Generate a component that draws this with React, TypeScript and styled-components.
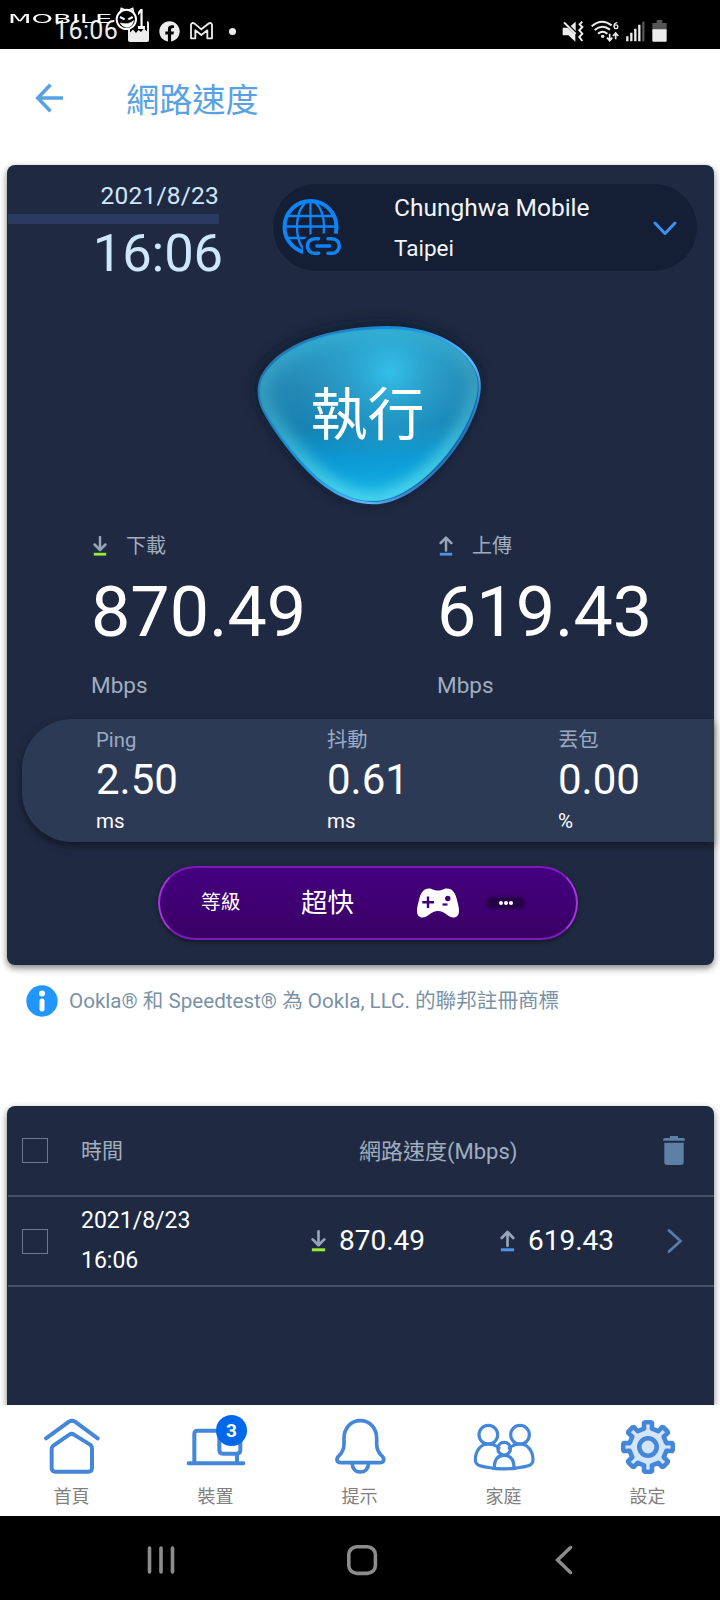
import React from "react";
import styled, { createGlobalStyle } from "styled-components";
import { FaFacebook } from "react-icons/fa";

const GlobalStyle = createGlobalStyle`
  * { box-sizing: border-box; }
  body {
    margin: 0;
    background: #fff;
    font-family: Roboto, "Noto Sans CJK TC", sans-serif;
  }
  svg { display: block; flex: none; }
`;

const Screen = styled.div`
  width: 720px;
  height: 1600px;
  display: flex;
  flex-direction: column;
  overflow: hidden;
  background: #fff;
`;

/* ---------- status bar ---------- */

const StatusBar = styled.div`
  position: relative;
  height: 49px;
  flex: none;
  background: #000;
  color: #ececec;
  display: flex;
  align-items: center;
  justify-content: space-between;
  padding: 13px 53px 0 54px;
`;

const StatusGroup = styled.div<{ $gap: number }>`
  display: flex;
  align-items: center;
  gap: ${(p) => p.$gap}px;
`;

const StatusTime = styled.span`
  font-size: 25px;
  line-height: 30px;
  letter-spacing: 0.4px;
  width: 64px;
`;

const Dot = styled.span`
  width: 7px;
  height: 7px;
  border-radius: 50%;
  background: #ececec;
  margin-left: 6px;
`;

const Watermark = styled.div`
  position: absolute;
  left: 8px;
  top: 6px;
  display: flex;
  align-items: center;
  color: #fff;
`;

const WatermarkText = styled.span`
  width: 107px;
  font: 13px/24px "DejaVu Sans", sans-serif;
  white-space: nowrap;
  transform: scaleX(2.1);
  transform-origin: left center;
`;

const WatermarkOne = styled.span`
  margin-left: -2px;
  font: 700 30px/24px "Liberation Sans", sans-serif;
  transform: scaleX(0.5);
  transform-origin: left center;
`;

/* ---------- header ---------- */

const Header = styled.header`
  height: 116px;
  flex: none;
  display: flex;
  align-items: flex-start;
  padding: 34px 0 0 35px;
`;

const Title = styled.h1`
  margin: 1px 0 0 62px;
  font-size: 33.2px;
  line-height: 33px;
  font-weight: 400;
  color: #58a2e4;
`;

/* ---------- cards ---------- */

const Card = styled.section<{ $height: number; $flat?: boolean }>`
  width: 707px;
  height: ${(p) => p.$height}px;
  flex: none;
  margin-left: 7px;
  padding-left: 1px;
  background: #1f2a42;
  border-radius: ${(p) => (p.$flat ? "8px 8px 0 0" : "8px")};
  box-shadow: 0 3px 7px rgba(0, 0, 0, 0.5);
`;

const TopRow = styled.div`
  display: flex;
  height: 122px;
  padding-top: 19px;
`;

const Clock = styled.div`
  width: 217px;
  margin-right: 48px;
  display: flex;
  flex-direction: column;
  align-items: flex-end;
  color: #cfe7fd;
`;

const ClockDate = styled.span`
  margin: -4px 6px 0 0;
  font-size: 24.5px;
  line-height: 31px;
  letter-spacing: 0.2px;
  padding-bottom: 3px;
`;

const ClockBar = styled.div`
  width: 211px;
  height: 10px;
  flex: none;
  background: #2a3a60;
  align-self: flex-start;
`;

const ClockTime = styled.span`
  font-size: 52.5px;
  line-height: 58px;
  letter-spacing: -0.1px;
  padding-right: 2px;
`;

const ServerPill = styled.button`
  width: 424px;
  height: 87px;
  border: 0;
  border-radius: 44px;
  background: #141f35;
  color: #f2f5fa;
  padding: 0 20px 0 9px;
  display: flex;
  align-items: center;
  font-family: inherit;
  text-align: left;
`;

const ServerText = styled.div`
  flex: 1;
  padding: 1px 0 0 52px;
  display: flex;
  flex-direction: column;
`;

const ServerLine = styled.span<{ $size: number }>`
  font-size: ${(p) => p.$size}px;
  line-height: 40px;
`;

const RunButton = styled.button`
  margin: 23px 0 0 232px;
  padding: 0;
  border: 0;
  background: none;
  display: grid;
  width: 260px;
  height: 210px;
  color: #fff;
  font-family: inherit;
  > * { grid-area: 1 / 1; }
`;

const RunLabel = styled.span`
  align-self: center;
  justify-self: center;
  font-size: 57px;
  line-height: 60px;
  padding: 2px 5px 0 0;
`;

const Speeds = styled.div`
  display: grid;
  grid-template-columns: 346px 1fr;
  padding-left: 83px;
  margin-top: 12px;
`;

const Speed = styled.div`
  display: flex;
  flex-direction: column;
  color: #a0adbf;
`;

const SpeedHead = styled.div`
  display: flex;
  align-items: center;
  gap: 19px;
  height: 28px;
  padding-left: 2px;
  font-size: 20px;
  line-height: 28px;
`;

const SpeedValue = styled.span`
  font-size: 70px;
  line-height: 84px;
  margin-top: 10px;
  color: #fff;
`;

const SpeedUnit = styled.span`
  font-size: 22.5px;
  line-height: 30px;
  margin-top: 16px;
`;

const Band = styled.div`
  margin: 19px 0 0 14px;
  height: 123px;
  border-radius: 50px 0 0 50px;
  background: #2d3a56;
  box-shadow: 0 4px 8px rgba(0, 0, 0, 0.45);
  display: grid;
  grid-template-columns: 231px 231px 1fr;
  padding: 7px 0 0 74px;
`;

const Stat = styled.div`
  display: flex;
  flex-direction: column;
`;

const StatName = styled.span`
  font-size: 20.3px;
  line-height: 28px;
  color: #9aabc1;
`;

const StatValue = styled.span`
  font-size: 42px;
  line-height: 52px;
  color: #fff;
`;

const StatUnit = styled.span`
  font-size: 20.5px;
  line-height: 30px;
  color: #fff;
`;

const Grade = styled.div`
  margin: 24px 0 0 150px;
  width: 420px;
  height: 74px;
  border-radius: 37px;
  border: 2px solid #7e18bf;
  border-left-color: #a832e0;
  border-right-color: #a832e0;
  background: linear-gradient(#450080, #390064);
  box-shadow: 0 2px 5px rgba(0, 0, 0, 0.5);
  color: #fff;
  display: flex;
  align-items: center;
  padding-left: 41px;
`;

const GradeLabel = styled.span`
  font-size: 19.7px;
  line-height: 30px;
  width: 100px;
`;

const GradeValue = styled.span`
  font-size: 26.5px;
  line-height: 34px;
  width: 116px;
`;

const More = styled.div`
  width: 37px;
  height: 10px;
  margin-left: 28px;
  border-radius: 5px;
  background: #280049;
  box-shadow: 0 0 3px 1px #280049;
  display: flex;
  align-items: center;
  justify-content: center;
  gap: 1px;
  > i { width: 4px; height: 4px; border-radius: 50%; background: #fff; }
`;

const Notice = styled.div`
  height: 141px;
  flex: none;
  padding: 20px 0 0 26px;
  display: flex;
  align-items: flex-start;
  gap: 11px;
  font-size: 20.6px;
  line-height: 32px;
  color: #7b91a5;
  white-space: nowrap;
`;

/* ---------- history ---------- */

const HistoryRow = styled.div<{ $height: number }>`
  height: ${(p) => p.$height}px;
  border-bottom: 2px solid #445166;
  display: flex;
  align-items: center;
  padding-left: 14px;
  color: #a0aebf;
  font-size: 22px;
`;

const Checkbox = styled.span`
  width: 26px;
  height: 25px;
  border: 1.5px solid #6b798c;
  margin-right: 33px;
`;

const HeadTime = styled.span`
  width: 278px;
  font-size: 21px;
  padding-bottom: 3px;
`;

const HeadSpeed = styled.span`
  width: 304px;
  padding-bottom: 4px;
`;

const RowTime = styled.div`
  width: 230px;
  display: flex;
  flex-direction: column;
  font-size: 23px;
  line-height: 40px;
  color: #fff;
`;

const RowSpeed = styled.div<{ $width: number }>`
  width: ${(p) => p.$width}px;
  display: flex;
  align-items: center;
  gap: 13px;
  padding-bottom: 1px;
  font-size: 28px;
  color: #fff;
`;

/* ---------- bottom navigation ---------- */

const TabBar = styled.nav`
  height: 111px;
  flex: none;
  background: #fff;
  display: grid;
  grid-template-columns: repeat(5, 144px);
`;

const Tab = styled.div`
  display: flex;
  flex-direction: column;
  align-items: center;
  font-size: 18px;
  color: #808080;
`;

const TabIcon = styled.div`
  position: relative;
  height: 82px;
  display: flex;
  align-items: center;
  justify-content: center;
  padding-top: 1px;
`;

const TabLabel = styled.span`
  line-height: 20px;
  padding-right: 1px;
`;

const Badge = styled.span`
  position: absolute;
  right: -1px;
  top: 10px;
  width: 31px;
  height: 31px;
  border-radius: 50%;
  background: #0068ea;
  color: #fff;
  font: 700 19px/31px Roboto, sans-serif;
  text-align: center;
`;

const SystemBar = styled.div`
  flex: 1;
  background: #000;
  display: flex;
  align-items: center;
  padding: 4px 0 0 147px;
`;

const SystemKey = styled.div<{ $width: number }>`
  width: ${(p) => p.$width}px;
`;

/* ---------- drawings ---------- */

const BLOB =
  "M440 48 C550 48 640 85 688 140 C722 180 730 220 716 275 C700 335 665 400 610 462 C550 530 475 583 400 583 C320 583 248 535 190 472 C135 412 95 355 66 300 C48 260 48 215 70 185 C112 122 190 88 260 70 C320 55 380 48 440 48 Z";
const BLOB_INNER =
  "M440 57 C542 56 628 88 678 142 C711 180 720 215 708 268 C692 328 657 394 602 455 C544 520 470 573 398 574 C325 574 253 528 196 467 C141 407 101 351 72 297 C54 258 56 219 76 190 C116 130 194 95 262 77 C322 63 380 57 440 57 Z";

const BlobDrawing = () => (
  <svg width="260" height="210" viewBox="0 0 780 630" overflow="visible">
    <defs>
      <linearGradient id="base" x1="0" y1="0" x2="0.08" y2="1">
        <stop offset="0" stopColor="#2ba2cc" />
        <stop offset="0.35" stopColor="#2588b4" />
        <stop offset="0.6" stopColor="#1683b4" />
        <stop offset="0.78" stopColor="#0c99d2" />
        <stop offset="1" stopColor="#12b0e6" />
      </linearGradient>
      <radialGradient id="glow" gradientUnits="userSpaceOnUse" cx="450" cy="185" r="290">
        <stop offset="0" stopColor="#33c0ea" />
        <stop offset="0.45" stopColor="#2fb0da" stopOpacity="0.5" />
        <stop offset="1" stopColor="#2fa0cc" stopOpacity="0" />
      </radialGradient>
      <linearGradient id="rim" x1="0" y1="0" x2="1" y2="0.6">
        <stop offset="0" stopColor="#2b6f9e" />
        <stop offset="0.5" stopColor="#1690dc" />
        <stop offset="0.8" stopColor="#66b6ff" />
        <stop offset="1" stopColor="#185c9c" />
      </linearGradient>
      <linearGradient id="edge" x1="0" y1="0" x2="0.15" y2="1">
        <stop offset="0" stopColor="#35b4d8" stopOpacity="0.5" />
        <stop offset="0.4" stopColor="#4bb0c4" stopOpacity="0.5" />
        <stop offset="1" stopColor="#55dcec" stopOpacity="0.85" />
      </linearGradient>
      <filter id="soft" x="-20%" y="-20%" width="140%" height="140%">
        <feGaussianBlur stdDeviation="20" />
      </filter>
      <clipPath id="inner">
        <path d={BLOB_INNER} />
      </clipPath>
    </defs>
    <path d={BLOB} fill="#0d1526" opacity="0.75" filter="url(#soft)" transform="translate(-6 -8)" />
    <path d={BLOB} fill="url(#rim)" />
    <path d={BLOB_INNER} fill="#0b5fa0" transform="translate(3 2)" />
    <g clipPath="url(#inner)">
      <path d={BLOB_INNER} fill="url(#base)" />
      <path d={BLOB_INNER} fill="url(#glow)" />
      <path d={BLOB_INNER} fill="none" stroke="url(#edge)" strokeWidth="54" filter="url(#soft)" />
    </g>
    <path d={BLOB_INNER} fill="none" stroke="#139fe8" strokeWidth="3" opacity="0.5" />
  </svg>
);

const GlobeLink = () => (
  <svg width="60" height="58" viewBox="0 0 60 58" fill="none" stroke="#0d84f8">
    <defs>
      <mask id="cut">
        <rect width="60" height="58" fill="#fff" stroke="none" />
        <rect x="21" y="34.5" width="44" height="30" rx="12" fill="#000" stroke="none" />
      </mask>
    </defs>
    <g mask="url(#cut)" strokeWidth="2.300">
      <circle cx="28.500" cy="28" r="26" strokeWidth="4" />
      <ellipse cx="28.500" cy="28" rx="13.5" ry="26" />
      <path d="M28.500 2V54M5 17H51M2 27.500H54M5 39H51" />
    </g>
    <g strokeWidth="3.600" strokeLinecap="round">
      <path d="M36.5 39.700H32.7a7.3 7.3 0 0 0 0 14.6H36.5M46 39.700H50a7.3 7.3 0 0 1 0 14.6H46M35 47H47.5" />
    </g>
  </svg>
);

const SpeedArrow = ({ up, w = 14, h = 20 }: { up?: boolean; w?: number; h?: number }) => (
  <svg width={w} height={h} viewBox="0 0 14 20" fill="none" strokeLinecap="round" strokeLinejoin="round">
    <path
      d={up ? "M7 14.500V2M1.600 7.2L7 1.600L12.400 7.2" : "M7 1V13.5M1.600 8.5L7 14L12.400 8.5"}
      stroke="#97a5b8"
      strokeWidth="2.5"
    />
    <path d="M0.800 18.200H13.200" stroke={up ? "#4a93e6" : "#9be83c"} strokeWidth="2.800" strokeLinecap="butt" />
  </svg>
);

const gearPath = (() => {
  const pts: string[] = [];
  for (let i = 0; i < 8; i++) {
    [
      [-12, 18.800],
      [-9.5, 24.4],
      [-6, 25],
      [6, 25],
      [9.5, 24.4],
      [12, 18.800],
    ].forEach(([deg, r]) => {
      const a = ((i * 45 + deg - 90) * Math.PI) / 180;
      pts.push(`${(27 + r * Math.cos(a)).toFixed(2)} ${(27 + r * Math.sin(a)).toFixed(2)}`);
    });
  }
  return `M${pts.join("L")}Z`;
})();

const iconProps = {
  fill: "none",
  stroke: "#4487d8",
  strokeLinecap: "round" as const,
  strokeLinejoin: "round" as const,
};

const HomeIcon = () => (
  <svg width="58" height="57" viewBox="130 84 174 171" {...iconProps} strokeWidth="12">
    <path d="M139 145L208 95Q217 89 226 95L294 145" />
    <path d="M156 178Q156 170 162 166L209 134Q216 129 223 134L271 164Q277 168 277 176V234Q277 245 266 245H167Q156 245 156 234Z" />
  </svg>
);

const DevicesIcon = () => (
  <svg width="60" height="40" viewBox="556 130 180 120" {...iconProps} strokeWidth="12">
    <path d="M581 236V151Q581 141 591 141H655M564 239H728M709 212V236" />
    <path d="M656 141V199Q656 210 667 210H708Q719 210 719 199V141Z" />
  </svg>
);

const BellIcon = () => (
  <svg width="53" height="57" viewBox="1006 84 159 171" {...iconProps} strokeWidth="11">
    <path d="M1085 92C1056 92 1036 115 1036 145V162C1036 180 1029 190 1020 198C1011 208 1014 218 1026 218H1144C1156 218 1159 208 1150 198C1141 190 1134 182 1134 162V145C1134 115 1114 92 1085 92Z" />
    <path d="M1060 220C1062 238 1072 246 1085 246C1098 246 1108 238 1110 220" />
  </svg>
);

const FamilyIcon = () => (
  <svg width="62" height="48" viewBox="340 97 186 144" {...iconProps} strokeWidth="9.500">
    <circle cx="386" cy="132" r="28" />
    <circle cx="481" cy="132" r="28" />
    <circle cx="433.5" cy="174" r="19" />
    <path d="M418 172C408 164 398 160 386 160C362 160 347 182 347 207C347 228 370 228 404 233" />
    <path d="M449 172C459 164 469 160 481 160C505 160 520 182 520 207C520 228 497 228 463 233" />
    <path d="M404 231C404 206 414 194 433.5 194C453 194 463 206 463 231M400 233Q433 236 467 233" />
  </svg>
);

const GearIcon = () => (
  <svg width="54" height="54" viewBox="0 0 54 54" {...iconProps} strokeWidth="4.600">
    <path d={gearPath} fill="#d3e5fb" />
    <circle cx="27" cy="27" r="8.700" />
  </svg>
);

const Gamepad = () => (
  <svg width="42" height="30" viewBox="0 0 42 30">
    <path
      d="M12 0.5C15.5 0.5 16 2.500 21 2.500C26 2.500 26.500 0.5 30 0.5C35.500 0.5 38.500 5 40 12C41.200 17 42 19 42 23C42 27 40 29.500 36.500 29.500C31 29.500 28 23 21 23C14 23 11 29.500 5.500 29.500C2 29.500 0 27 0 23C0 19 0.800 17 2 12C3.500 5 6.500 0.500 12 0.500Z"
      fill="#fff"
    />
    <path d="M11 8.500V20M5.300 14.200H17" stroke="#40007a" strokeWidth="2.400" />
    <circle cx="30.800" cy="10.500" r="2.700" fill="#40007a" />
    <path d="M25.500 16.500H30.500" stroke="#40007a" strokeWidth="2.200" />
  </svg>
);

const MuteIcon = () => (
  <svg width="22" height="23" viewBox="607 57 66 69">
    <path d="M632 76L648 62V92Z" fill="#ececec" />
    <path d="M613 64L648 99" stroke="#000" strokeWidth="13" />
    <path d="M613 64L648 99" stroke="#ececec" strokeWidth="6" />
    <path d="M609 80H624L647 101V122L626 103H609Z" fill="#ececec" />
    <path d="M668 62L660 70L668 78L659 88L668 98L659 108L668 120" fill="none" stroke="#ececec" strokeWidth="6" />
  </svg>
);

const WifiIcon = () => (
  <svg width="28" height="23" viewBox="696 57 84 69" fill="none" stroke="#ececec" strokeWidth="6">
    <path d="M698 76Q728 50 758 73M707 87Q729 68 753 86M717 98Q731 87 745 98" />
    <circle cx="731" cy="106" r="5" fill="#ececec" stroke="none" />
    <path d="M752 98V118M744 110L752 119L760 110M770 115V97M762 105L770 96L778 105" strokeWidth="5" />
    <path d="M775 65Q765 66 765 77" strokeWidth="4" />
    <circle cx="771" cy="77" r="5.500" strokeWidth="4" />
  </svg>
);

const SignalIcon = () => (
  <svg width="19" height="21" viewBox="795 62 57 63" strokeWidth="7">
    <path d="M799 108V123M811 97V123M823 85V123M835 73V123" stroke="#ececec" />
    <path d="M847 64V123" stroke="#555" />
  </svg>
);

const BatteryIcon = () => (
  <svg width="15" height="22" viewBox="877 58 45 66">
    <path d="M891 58H908V67H921V88H878V67H891Z" fill="#555" />
    <rect x="878" y="86" width="43" height="37" rx="3" fill="#ececec" />
  </svg>
);

const GalleryIcon = () => (
  <svg width="21" height="21" viewBox="0 0 21 21">
    <rect width="21" height="21" rx="2" fill="#ececec" />
    <path d="M2 11.500L5 8.500L8 12L10.500 9L13 11L16 7.500L19 10.500V0H2Z" fill="#000" />
  </svg>
);

const MailIcon = () => (
  <svg width="23" height="18" viewBox="570 66 69 54" fill="none" stroke="#ececec" strokeWidth="5.500" strokeLinejoin="round">
    <path d="M573 115V74Q575 66 584 71L604 88L625 71Q634 66 636 74V115H622V91L604 105L586 91V115Z" />
  </svg>
);

const DevilIcon = () => (
  <svg width="24" height="26" viewBox="344 14 72 78" fill="none" stroke="#fff" strokeWidth="6">
    <circle cx="378" cy="54" r="29" fill="#000" />
    <path d="M359 36L363 21L374 26M386 26L397 21L400 36" strokeWidth="5" />
    <path d="M359 47L373 54M397 47L384 54" />
    <path d="M360 65Q385 72 400 58Q396 78 378 78Q366 76 360 65Z" fill="#fff" strokeWidth="2" />
  </svg>
);

export default function App() {
  return (
    <>
      <GlobalStyle />
      <Screen>
        <StatusBar>
          <StatusGroup $gap={10}>
            <StatusTime>16:06</StatusTime>
            <GalleryIcon />
            <FaFacebook size={21} />
            <MailIcon />
            <Dot />
          </StatusGroup>
          <StatusGroup $gap={7}>
            <MuteIcon />
            <WifiIcon />
            <SignalIcon />
            <BatteryIcon />
          </StatusGroup>
          <Watermark>
            <WatermarkText>MOBILE</WatermarkText>
            <DevilIcon />
            <WatermarkOne>1</WatermarkOne>
          </Watermark>
        </StatusBar>

        <Header>
          <svg width="29" height="30" viewBox="0 0 29 30" fill="none" stroke="#58a2e4" strokeWidth="3.600">
            <path d="M28 15H3M15.500 1.800L2.800 15L15.500 28.200" />
          </svg>
          <Title>網路速度</Title>
        </Header>

        <Card $height={800}>
          <TopRow>
            <Clock>
              <ClockDate>2021/8/23</ClockDate>
              <ClockBar />
              <ClockTime>16:06</ClockTime>
            </Clock>
            <ServerPill>
              <GlobeLink />
              <ServerText>
                <ServerLine $size={24.5}>Chunghwa Mobile</ServerLine>
                <ServerLine $size={22.5}>Taipei</ServerLine>
              </ServerText>
              <svg width="24" height="15" viewBox="0 0 24 15" fill="none" stroke="#3e90ea" strokeWidth="3" strokeLinecap="round">
                <path d="M2 3L12 13.500L22 3" />
              </svg>
            </ServerPill>
          </TopRow>

          <RunButton>
            <BlobDrawing />
            <RunLabel>執行</RunLabel>
          </RunButton>

          <Speeds>
            <Speed>
              <SpeedHead>
                <SpeedArrow />
                下載
              </SpeedHead>
              <SpeedValue>870.49</SpeedValue>
              <SpeedUnit>Mbps</SpeedUnit>
            </Speed>
            <Speed>
              <SpeedHead>
                <SpeedArrow up />
                上傳
              </SpeedHead>
              <SpeedValue>619.43</SpeedValue>
              <SpeedUnit>Mbps</SpeedUnit>
            </Speed>
          </Speeds>

          <Band>
            <Stat>
              <StatName>Ping</StatName>
              <StatValue>2.50</StatValue>
              <StatUnit>ms</StatUnit>
            </Stat>
            <Stat>
              <StatName>抖動</StatName>
              <StatValue>0.61</StatValue>
              <StatUnit>ms</StatUnit>
            </Stat>
            <Stat>
              <StatName>丟包</StatName>
              <StatValue>0.00</StatValue>
              <StatUnit>%</StatUnit>
            </Stat>
          </Band>

          <Grade>
            <GradeLabel>等級</GradeLabel>
            <GradeValue>超快</GradeValue>
            <Gamepad />
            <More>
              <i />
              <i />
              <i />
            </More>
          </Grade>
        </Card>

        <Notice>
          <svg width="32" height="32" viewBox="0 0 32 32">
            <circle cx="16" cy="16" r="15.700" fill="#2296ff" />
            <circle cx="16" cy="8.500" r="3" fill="#fff" />
            <rect x="13.500" y="13.500" width="5" height="13" rx="2.500" fill="#fff" />
          </svg>
          Ookla® 和 Speedtest® 為 Ookla, LLC. 的聯邦註冊商標
        </Notice>

        <Card $height={299} $flat>
          <HistoryRow $height={91}>
            <Checkbox />
            <HeadTime>時間</HeadTime>
            <HeadSpeed>網路速度(Mbps)</HeadSpeed>
            <svg width="22" height="29" viewBox="0 0 22 29" fill="#5d80a5">
              <path d="M7 0H15V2H20Q22 2 22 4.800H0Q0 2 2 2H7Z" />
              <path d="M1.300 6.800H20.700V26Q20.700 29 17.700 29H4.300Q1.300 29 1.300 26Z" />
            </svg>
          </HistoryRow>
          <HistoryRow $height={90}>
            <Checkbox />
            <RowTime>
              <span>2021/8/23</span>
              <span>16:06</span>
            </RowTime>
            <RowSpeed $width={189}>
              <SpeedArrow w={15} h={22} />
              870.49
            </RowSpeed>
            <RowSpeed $width={167}>
              <SpeedArrow up w={15} h={22} />
              619.43
            </RowSpeed>
            <svg width="16" height="24" viewBox="0 0 16 24" fill="none" stroke="#587ca5" strokeWidth="2.800" strokeLinecap="round">
              <path d="M2 1.500L13.500 12L2 22.500" />
            </svg>
          </HistoryRow>
        </Card>

        <TabBar>
          <Tab>
            <TabIcon><HomeIcon /></TabIcon>
            <TabLabel>首頁</TabLabel>
          </Tab>
          <Tab>
            <TabIcon>
              <DevicesIcon />
              <Badge>3</Badge>
            </TabIcon>
            <TabLabel>裝置</TabLabel>
          </Tab>
          <Tab>
            <TabIcon><BellIcon /></TabIcon>
            <TabLabel>提示</TabLabel>
          </Tab>
          <Tab>
            <TabIcon><FamilyIcon /></TabIcon>
            <TabLabel>家庭</TabLabel>
          </Tab>
          <Tab>
            <TabIcon><GearIcon /></TabIcon>
            <TabLabel>設定</TabLabel>
          </Tab>
        </TabBar>

        <SystemBar>
          <SystemKey $width={199}>
            <svg width="28" height="30" viewBox="0 0 28 30" stroke="#8c8c8c" strokeWidth="3.600" strokeLinecap="round">
              <path d="M2.500 3V27M14 3V27M25.500 3V27" />
            </svg>
          </SystemKey>
          <SystemKey $width={208}>
            <svg width="32" height="32" viewBox="0 0 32 32" fill="none" stroke="#8c8c8c" strokeWidth="3.600">
              <rect x="2.800" y="2.800" width="26.600" height="26.600" rx="8" />
            </svg>
          </SystemKey>
          <SystemKey $width={30}>
            <svg width="20" height="30" viewBox="0 0 20 30" fill="none" stroke="#8c8c8c" strokeWidth="3.400" strokeLinecap="round">
              <path d="M16.500 2.500L3.500 15L16.500 27.500" />
            </svg>
          </SystemKey>
        </SystemBar>
      </Screen>
    </>
  );
}
